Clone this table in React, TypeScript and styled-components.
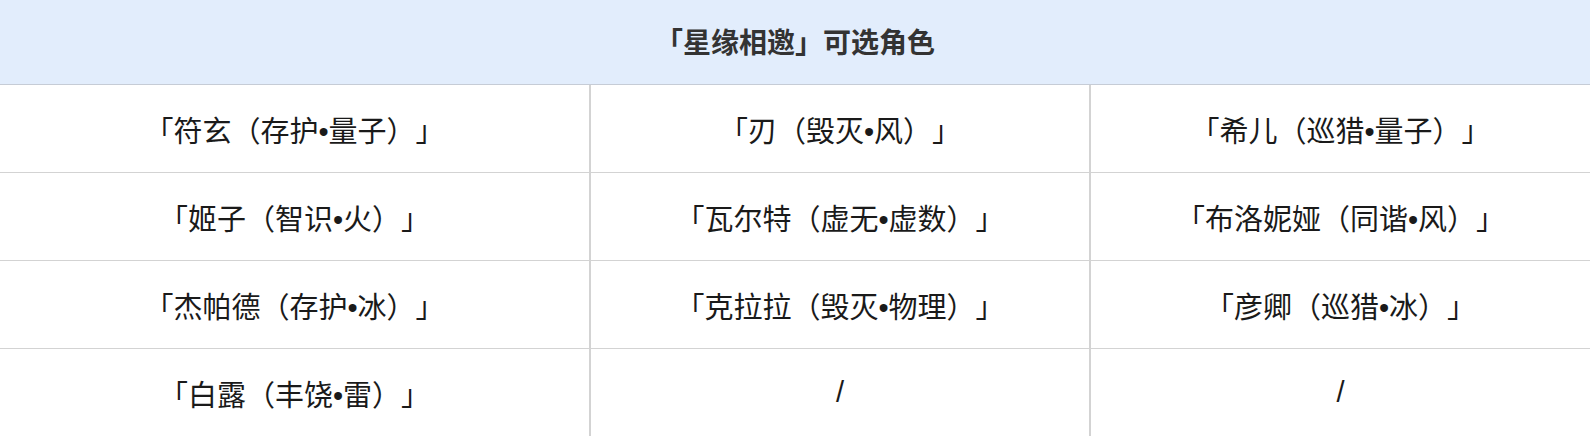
import React from "react";
import styled, { createGlobalStyle } from "styled-components";

const Global = createGlobalStyle`
  html, body {
    margin: 0;
    padding: 0;
    background: #ffffff;
  }
  body {
    font-family: "Liberation Sans", "Noto Sans CJK SC", sans-serif;
    text-spacing-trim: space-all;
  }
`;

const Tabla = styled.div`
  width: 1590px;
  display: grid;
  grid-template-columns: 591px 500px 1fr;
  grid-template-rows: 85px repeat(4, 88px);
  background: #ffffff;
`;

const Cabecera = styled.div`
  grid-column: 1 / -1;
  background: #e2edfc;
  border-bottom: 1px solid #c6ccd6;
  display: flex;
  align-items: center;
  justify-content: center;
  padding-bottom: 2px;
  font-family: "Noto Sans CJK SC", sans-serif;
  font-size: 28px;
  font-weight: 700;
  color: #333333;
`;

const Celda = styled.div<{ $last?: boolean }>`
  display: flex;
  align-items: center;
  justify-content: center;
  border-bottom: 1px solid #d3d3d3;
  border-right: ${(p) => (p.$last ? "none" : "2px solid #d3d3d3")};
  font-size: 29px;
  color: #1a1a1a;
  text-spacing-trim: space-all;
`;

const filas = [
  ["「符玄（存护•量子）」", "「刃（毁灭•风）」", "「希儿（巡猎•量子）」"],
  ["「姬子（智识•火）」", "「瓦尔特（虚无•虚数）」", "「布洛妮娅（同谐•风）」"],
  ["「杰帕德（存护•冰）」", "「克拉拉（毁灭•物理）」", "「彦卿（巡猎•冰）」"],
  ["「白露（丰饶•雷）」", "/", "/"],
];

const App = () => {
  return (
    <>
      <Global />
      <Tabla>
        <Cabecera>「星缘相邀」可选角色</Cabecera>
        {filas.map((fila, i) => (
          <React.Fragment key={i}>
            {fila.map((nombre, j) => (
              <Celda key={j} $last={j === fila.length - 1}>
                {nombre}
              </Celda>
            ))}
          </React.Fragment>
        ))}
      </Tabla>
    </>
  );
};

export default App;
